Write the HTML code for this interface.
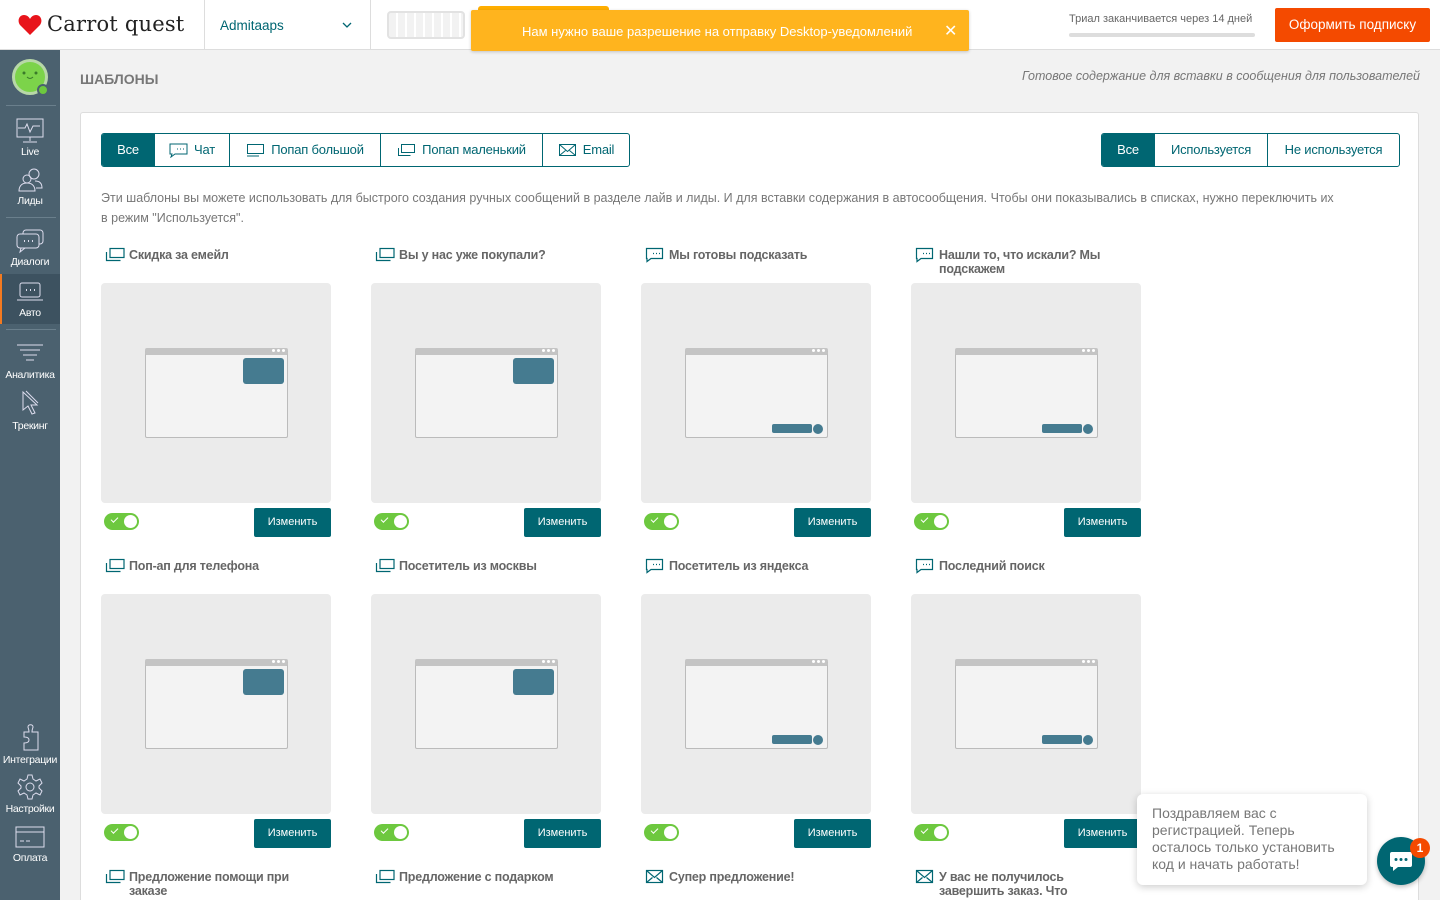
<!DOCTYPE html>
<html><head><meta charset="utf-8"><style>
*{box-sizing:border-box;margin:0;padding:0}
html{overflow:hidden;height:900px}
body{width:1440px;height:900px;overflow:hidden;background:#f2f2f2;font-family:"Liberation Sans",sans-serif;position:relative;color:#333}
.hdr{position:absolute;left:0;top:0;width:1440px;height:50px;background:#fff;border-bottom:1px solid #ddd}
.side{position:absolute;left:0;top:50px;width:60px;height:850px;background:#4b616f}
.si{position:absolute;left:0;width:60px;text-align:center;color:#fff;font-size:10.5px;letter-spacing:-0.3px}
.si svg{display:block;margin:0 auto 2px}
.panel{position:absolute;left:80px;top:112px;width:1339px;height:788px;background:#fff;border:1px solid #ddd;border-bottom:none;border-radius:3px 3px 0 0}
.seg{position:absolute;top:133px;height:34px;display:flex;border:1px solid #006672;border-radius:3px;overflow:hidden}
.seg div{height:32px;line-height:32px;font-size:13px;color:#006672;border-left:1px solid #006672;display:flex;align-items:center;justify-content:center;gap:6px;white-space:nowrap;letter-spacing:-0.2px}
.seg div:first-child{border-left:none}
.seg .on{background:#006672;color:#fff}
.card{position:absolute;width:230px}
.ct{position:absolute;left:4px;top:0;width:220px;font-size:12.5px;font-weight:bold;color:#666;line-height:14px;padding-left:24px;letter-spacing:-0.2px}
.ct svg{position:absolute;left:0;top:-1px}
.pv{position:absolute;left:0;top:35px;width:230px;height:220px;background:#ebebeb;border-radius:4px}
.win{position:absolute;left:44px;top:65px;width:143px;height:90px;background:#f3f3f3;border:1px solid #bbb;border-top:7px solid #c4c4c4;border-radius:2px}
.dots{position:absolute;right:2px;top:-6px;font-size:0}
.dots i{display:inline-block;width:3px;height:3px;border-radius:50%;background:#fff;margin-left:2px}
.blk{position:absolute;right:3px;top:3px;width:41px;height:26px;background:#457b90;border-radius:3px}
.bar{position:absolute;right:15px;bottom:4px;width:40px;height:9px;background:#457b90;border-radius:2px}
.circ{position:absolute;right:4px;bottom:3px;width:10px;height:10px;background:#457b90;border-radius:50%}
.tg{position:absolute;left:3px;top:265px;width:35px;height:17px;background:#6dc83f;border-radius:9px}
.tg::after{content:"";position:absolute;right:2px;top:2px;width:13px;height:13px;border-radius:50%;background:#fff}
.tg::before{content:"";position:absolute;left:7px;top:4px;width:6px;height:3px;border-left:1.5px solid #fff;border-bottom:1.5px solid #fff;transform:rotate(-45deg)}
.btn{position:absolute;right:0;top:260px;width:77px;height:29px;background:#006672;color:#fff;font-size:11px;text-align:center;line-height:29px;border-radius:2px}
</style></head><body>
<div class="hdr">
 <svg style="position:absolute;left:18px;top:14px" width="24" height="22" viewBox="0 0 24 22"><path d="M12 21 L2 11 C-1 7 1 1 6 1 C9 1 11 3 12 5 C13 3 15 1 18 1 C23 1 25 7 22 11 Z" fill="#e8141b"/></svg>
 <div style="position:absolute;left:47px;top:12px;font-family:'DejaVu Serif','Liberation Serif',serif;font-size:21px;color:#222;letter-spacing:0.2px">Carrot quest</div>
 <div style="position:absolute;left:204px;top:0;width:1px;height:50px;background:#ddd"></div>
 <div style="position:absolute;left:220px;top:18px;font-size:13.5px;color:#006672">Admitaaps</div>
 <svg style="position:absolute;left:342px;top:22px" width="10" height="7"><path d="M1 1l4 4 4-4" stroke="#006672" fill="none" stroke-width="1.3"/></svg>
 <div style="position:absolute;left:370px;top:0;width:1px;height:50px;background:#ddd"></div>
 <div style="position:absolute;left:387px;top:11px;width:78px;height:28px;border:2px solid #e2e2e2;border-radius:4px;background:repeating-linear-gradient(90deg,#f2f2f2 0 7px,#fff 7px 9px)"></div>
 <div style="position:absolute;left:478px;top:6px;width:131px;height:38px;background:#ffae00;border-radius:3px"></div>
 <div style="position:absolute;left:471px;top:10px;width:498px;height:41px;background:#ffb41e;border-radius:2px;box-shadow:0 1px 3px rgba(0,0,0,.2)"></div>
 <div style="position:absolute;left:522px;top:24px;font-size:13px;color:#fff">Нам нужно ваше разрешение на отправку Desktop-уведомлений</div>
 <div style="position:absolute;left:944px;top:21px;font-size:16px;color:#fff">✕</div>
 <div style="position:absolute;left:1069px;top:13px;font-size:11px;color:#666">Триал заканчивается через 14 дней</div>
 <div style="position:absolute;left:1069px;top:33px;width:186px;height:4px;background:#ddd;border-radius:2px"></div>
 <div style="position:absolute;left:1275px;top:8px;width:155px;height:34px;background:#f44a00;border-radius:2px;color:#fff;font-size:13.5px;text-align:center;line-height:34px">Оформить подписку</div>
</div>
<div class="side">
 <div style="position:absolute;left:12px;top:9px;width:36px;height:36px;border-radius:50%;background:#7cd34a;border:3px solid #b8d8a8"></div>
 <svg style="position:absolute;left:20px;top:20px" width="20" height="12"><circle cx="4" cy="3" r="1.5" fill="#3a7a2a"/><circle cx="16" cy="3" r="1.5" fill="#3a7a2a"/><path d="M7 7q3 3 6 0" stroke="#3a7a2a" fill="none"/></svg>
 <div style="position:absolute;left:37px;top:34px;width:12px;height:12px;border-radius:50%;background:#6dc83f;border:2px solid #4b616f"></div>
 <div style="position:absolute;left:6px;top:55px;width:50px;height:1px;background:#6a7f8c"></div>
 <div class="si" style="top:68px"><svg width="30" height="26" viewBox="0 0 30 26" fill="none" stroke="#dde" stroke-width="1"><rect x="2" y="1" width="26" height="18"/><path d="M3 10h7l2-4 3 8 3-6h7M15 19v4M8 24h14"/></svg>Live</div>
 <div class="si" style="top:117px"><svg width="30" height="26" viewBox="0 0 30 26" fill="none" stroke="#dde" stroke-width="1"><circle cx="19" cy="7" r="5"/><circle cx="12" cy="12" r="4"/><path d="M4 24c0-6 4-8 8-8s8 2 8 8zM20 14c4 0 7 2 7 7h-6"/></svg>Лиды</div>
 <div style="position:absolute;left:6px;top:167px;width:50px;height:1px;background:#6a7f8c"></div>
 <div class="si" style="top:178px"><svg width="30" height="26" viewBox="0 0 30 26" fill="none" stroke="#dde" stroke-width="1"><rect x="8" y="2" width="20" height="14" rx="3"/><rect x="2" y="6" width="22" height="14" rx="3" fill="#4b616f"/><path d="M6 20l-1 4 5-4"/><path d="M9 13h1M13 13h1M17 13h1" stroke-width="2"/></svg>Диалоги</div>
 <div style="position:absolute;left:0;top:224px;width:60px;height:50px;background:#3d5260;border-left:2px solid #f47a20"></div>
 <div class="si" style="top:231px"><svg width="30" height="24" viewBox="0 0 30 24" fill="none" stroke="#dde" stroke-width="1"><rect x="5" y="2" width="20" height="14" rx="2"/><path d="M11 9h1M15 9h1M19 9h1" stroke-width="2"/><path d="M2 19h26"/></svg>Авто</div>
 <div style="position:absolute;left:6px;top:279px;width:50px;height:1px;background:#6a7f8c"></div>
 <div class="si" style="top:293px"><svg width="30" height="24" viewBox="0 0 30 24" fill="none" stroke="#dde" stroke-width="1"><path d="M2 2h26M5 7h20M8 12h14M11 17h8"/></svg>Аналитика</div>
 <div class="si" style="top:340px"><svg width="30" height="28" viewBox="0 0 30 28" fill="none" stroke="#dde" stroke-width="1"><path d="M8 2v18l5-4 4 8 3-1-4-8h6z"/><path d="M11 1l12 12"/></svg>Трекинг</div>
 <div class="si" style="top:672px"><svg width="30" height="30" viewBox="0 0 30 30" fill="none" stroke="#dde" stroke-width="1"><path d="M9 28h14V10h-6c0-3 1-4 1-5 0-3-5-3-5 0 0 1 1 2 1 5H9v5c3 0 5 1 5 3s-2 3-5 3z"/></svg>Интеграции</div>
 <div class="si" style="top:723px"><svg width="30" height="28" viewBox="0 0 30 28" fill="none" stroke="#dde" stroke-width="1"><circle cx="15" cy="14" r="4"/><path d="M13 2h4l1 4 3 2 4-2 2 4-3 3v2l3 3-2 4-4-2-3 2-1 4h-4l-1-4-3-2-4 2-2-4 3-3v-2l-3-3 2-4 4 2 3-2z"/></svg>Настройки</div>
 <div class="si" style="top:774px"><svg width="30" height="26" viewBox="0 0 30 26" fill="none" stroke="#dde" stroke-width="1"><rect x="1" y="3" width="28" height="20"/><path d="M1 8h28M5 17h4M11 17h4"/></svg>Оплата</div>
</div>
<div style="position:absolute;left:80px;top:71px;font-size:14px;font-weight:bold;color:#777">ШАБЛОНЫ</div>
<div style="position:absolute;right:20px;top:69px;font-size:12.5px;font-style:italic;color:#777">Готовое содержание для вставки в сообщения для пользователей</div>
<div class="panel"></div>
<div class="seg" style="left:101px">
 <div class="on" style="width:52px">Все</div>
 <div style="width:75px"><svg width="19" height="15" fill="none" stroke="#006672"><path d="M1 1h17v10H6l-4 3 1-3H1z"/><path d="M8 6h1M11 6h1M14 6h1"/></svg>Чат</div>
 <div style="width:151px"><svg width="19" height="14" fill="none" stroke="#006672"><rect x="1.5" y="1.5" width="16" height="9"/><path d="M1 13h12"/></svg>Попап большой</div>
 <div style="width:162px"><svg width="19" height="14" fill="none" stroke="#006672"><rect x="4.5" y="1.5" width="13" height="8"/><path d="M1.5 5v7.5h12"/></svg>Попап маленький</div>
 <div style="width:87px"><svg width="19" height="14" fill="none" stroke="#006672"><rect x="1.5" y="1.5" width="16" height="11"/><path d="M1.5 1.5l8 7 8-7M1.5 12.5l6-5M17.5 12.5l-6-5"/></svg>Email</div>
</div>
<div class="seg" style="left:1101px">
 <div class="on" style="width:52px">Все</div><div style="width:113px">Используется</div><div style="width:132px">Не используется</div>
</div>
<div style="position:absolute;left:101px;top:188px;width:1240px;font-size:12.5px;color:#777;line-height:20px">Эти шаблоны вы можете использовать для быстрого создания ручных сообщений в разделе лайв и лиды. И для вставки содержания в автосообщения. Чтобы они показывались в списках, нужно переключить их в режим "Используется".</div>

<svg width="0" height="0" style="position:absolute"><defs>
<g id="ip" fill="none" stroke="#006672" stroke-width="1.2"><rect x="5" y="1.5" width="14" height="9"/><path d="M1.5 5v8.5h14"/></g>
<g id="ic" fill="none" stroke="#006672" stroke-width="1.2"><path d="M1.5 1.5h16v10H6l-4 3v-3H1.5z"/><path d="M8 6.5h1M11 6.5h1M14 6.5h1"/></g>
<g id="ie" fill="none" stroke="#006672" stroke-width="1.2"><rect x="1.5" y="1.5" width="16" height="12"/><path d="M1.5 1.5l8 7 8-7M1.5 13.5l6-5M17.5 13.5l-6-5"/></g>
</defs></svg>

<div class="card" style="left:101px;top:248px"><div class="ct"><svg width="20" height="16"><use href="#ip"/></svg>Скидка за емейл</div><div class="pv"><div class="win"><div class="dots"><i></i><i></i><i></i></div><div class="blk"></div></div></div><div class="tg"></div><div class="btn">Изменить</div></div>
<div class="card" style="left:371px;top:248px"><div class="ct"><svg width="20" height="16"><use href="#ip"/></svg>Вы у нас уже покупали?</div><div class="pv"><div class="win"><div class="dots"><i></i><i></i><i></i></div><div class="blk"></div></div></div><div class="tg"></div><div class="btn">Изменить</div></div>
<div class="card" style="left:641px;top:248px"><div class="ct"><svg width="20" height="16"><use href="#ic"/></svg>Мы готовы подсказать</div><div class="pv"><div class="win"><div class="dots"><i></i><i></i><i></i></div><div class="bar"></div><div class="circ"></div></div></div><div class="tg"></div><div class="btn">Изменить</div></div>
<div class="card" style="left:911px;top:248px"><div class="ct" style="width:215px"><svg width="20" height="16"><use href="#ic"/></svg>Нашли то, что искали? Мы подскажем</div><div class="pv"><div class="win"><div class="dots"><i></i><i></i><i></i></div><div class="bar"></div><div class="circ"></div></div></div><div class="tg"></div><div class="btn">Изменить</div></div>

<div class="card" style="left:101px;top:559px"><div class="ct"><svg width="20" height="16"><use href="#ip"/></svg>Поп-ап для телефона</div><div class="pv"><div class="win"><div class="dots"><i></i><i></i><i></i></div><div class="blk"></div></div></div><div class="tg"></div><div class="btn">Изменить</div></div>
<div class="card" style="left:371px;top:559px"><div class="ct"><svg width="20" height="16"><use href="#ip"/></svg>Посетитель из москвы</div><div class="pv"><div class="win"><div class="dots"><i></i><i></i><i></i></div><div class="blk"></div></div></div><div class="tg"></div><div class="btn">Изменить</div></div>
<div class="card" style="left:641px;top:559px"><div class="ct"><svg width="20" height="16"><use href="#ic"/></svg>Посетитель из яндекса</div><div class="pv"><div class="win"><div class="dots"><i></i><i></i><i></i></div><div class="bar"></div><div class="circ"></div></div></div><div class="tg"></div><div class="btn">Изменить</div></div>
<div class="card" style="left:911px;top:559px"><div class="ct"><svg width="20" height="16"><use href="#ic"/></svg>Последний поиск</div><div class="pv"><div class="win"><div class="dots"><i></i><i></i><i></i></div><div class="bar"></div><div class="circ"></div></div></div><div class="tg"></div><div class="btn">Изменить</div></div>

<div class="card" style="left:101px;top:870px"><div class="ct" style="width:200px"><svg width="20" height="16"><use href="#ip"/></svg>Предложение помощи при заказе</div></div>
<div class="card" style="left:371px;top:870px"><div class="ct"><svg width="20" height="16"><use href="#ip"/></svg>Предложение с подарком</div></div>
<div class="card" style="left:641px;top:870px"><div class="ct"><svg width="20" height="16"><use href="#ie"/></svg>Супер предложение!</div></div>
<div class="card" style="left:911px;top:870px"><div class="ct" style="width:200px"><svg width="20" height="16"><use href="#ie"/></svg>У вас не получилось завершить заказ. Что</div></div>

<div style="position:absolute;left:1137px;top:794px;width:230px;height:91px;background:#fff;border-radius:6px;box-shadow:0 2px 8px rgba(0,0,0,.2);padding:11px 15px;font-size:14px;line-height:17px;color:#777">Поздравляем вас с регистрацией. Теперь осталось только установить код и начать работать!</div>
<div style="position:absolute;left:1377px;top:837px;width:48px;height:48px;border-radius:50%;background:#006672;box-shadow:0 2px 5px rgba(0,0,0,.25)"></div>
<svg style="position:absolute;left:1389px;top:851px" width="24" height="22" viewBox="0 0 24 22"><path d="M3 1h18a2 2 0 0 1 2 2v11a2 2 0 0 1-2 2H9l-5 4v-4H3a2 2 0 0 1-2-2V3a2 2 0 0 1 2-2z" fill="#fff"/><circle cx="7" cy="8.5" r="1.5" fill="#006672"/><circle cx="12" cy="8.5" r="1.5" fill="#006672"/><circle cx="17" cy="8.5" r="1.5" fill="#006672"/></svg>
<div style="position:absolute;left:1410px;top:838px;width:20px;height:20px;border-radius:50%;background:#f44a00;color:#fff;font-size:12px;font-weight:bold;text-align:center;line-height:20px">1</div>
</body></html>
